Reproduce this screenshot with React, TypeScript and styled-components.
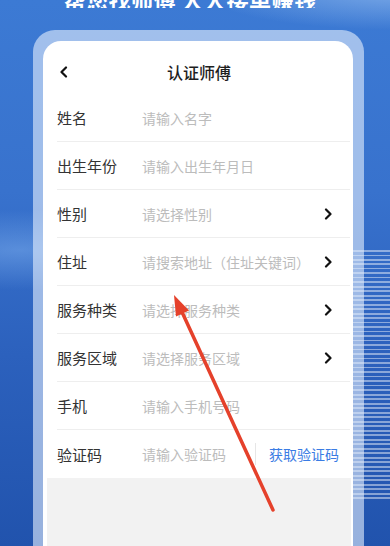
import React from "react";
import styled, { createGlobalStyle } from "styled-components";

const Global = createGlobalStyle`
  html, body { margin: 0; padding: 0; }
  body { font-family: "Noto Sans CJK SC", "Noto Sans", sans-serif; }
  * { box-sizing: border-box; }
`;

const Page = styled.div`
  position: relative;
  width: 390px;
  height: 546px;
  overflow: hidden;
  display: flex;
  flex-direction: column;
  background:
    repeating-linear-gradient(180deg, rgba(255,255,255,0.45) 0 1.5px, transparent 1.5px 4.5px) right 0 top 250px / 37px 250px no-repeat,
    radial-gradient(ellipse 170px 40px at 20px 250px, rgba(120,170,235,0.55), rgba(120,170,235,0) 100%),
    radial-gradient(ellipse 200px 40px at 400px -10px, rgba(150,190,240,0.7), rgba(150,190,240,0) 100%),
    linear-gradient(180deg, #3c7ad4 0%, #3872cd 35%, #2c61bd 65%, #2153ad 100%);
`;

const HeadStrip = styled.div`
  height: 8px;
  overflow: hidden;
  display: flex;
  align-items: flex-end;
  justify-content: center;
  padding-right: 10px;
`;

const Slogan = styled.div`
  color: #fff;
  font-size: 22px;
  font-weight: 700;
  line-height: 22px;
  margin-bottom: -2px;
  white-space: nowrap;
  letter-spacing: 0.5px;
`;

const Frame = styled.div`
  margin: 22px 0 0 33px;
  width: 331px;
  flex: 1;
  padding: 11px 11px 0 10px;
  border-radius: 22px 22px 0 0;
  background: rgba(225, 236, 252, 0.62);
  display: flex;
  flex-direction: column;
`;

const Card = styled.div`
  flex: 1;
  background: #fff;
  border-radius: 18px 18px 0 0;
  display: flex;
  flex-direction: column;
`;

const Header = styled.div`
  height: 53px;
  display: flex;
  align-items: center;
  justify-content: center;
  position: relative;
  padding-top: 9px;
`;

const BackBtn = styled.div`
  position: absolute;
  left: 16px;
  top: 25px;
  width: 10px;
  height: 12px;
  display: flex;
`;

const Title = styled.div`
  font-size: 16px;
  font-weight: 500;
  color: #1e1e1e;
  padding-left: 2px;
`;

const Row = styled.div<{ $last?: boolean }>`
  height: 48px;
  margin-left: 14px;
  margin-right: 3px;
  display: flex;
  align-items: center;
  border-bottom: ${(p) => (p.$last ? "none" : "1px solid #eeeeee")};
`;

const Label = styled.div`
  width: 85px;
  font-size: 15px;
  color: #333;
  flex-shrink: 0;
`;

const Placeholder = styled.div`
  flex: 1;
  font-size: 14px;
  color: #bcbcbc;
  white-space: nowrap;
`;

const Chevron = styled.div`
  width: 10px;
  height: 12px;
  margin-right: 17px;
  display: flex;
`;

const VDivider = styled.div`
  width: 1px;
  height: 22px;
  background: #e6e6e6;
  margin-right: 13px;
`;

const CodeBtn = styled.div`
  font-size: 14px;
  color: #3a7ce4;
  margin-right: 11px;
  white-space: nowrap;
`;

const Footer = styled.div`
  flex: 1;
  margin: 0 2px 0 4px;
  background: #f2f2f2;
`;

const Arrow = styled.svg`
  position: absolute;
  left: 0;
  top: 0;
  pointer-events: none;
`;

const ChevronIcon = ({ left }: { left?: boolean }) => (
  <svg width="10" height="12" viewBox="0 0 10 12">
    <path
      d={left ? "M7 1.5 L2.5 6 L7 10.5" : "M3 1.5 L7.5 6 L3 10.5"}
      fill="none"
      stroke="#111"
      strokeWidth="2.2"
      strokeLinecap="round"
      strokeLinejoin="round"
    />
  </svg>
);

type Field = { label: string; ph: string; arrow?: boolean };

const fields: Field[] = [
  { label: "姓名", ph: "请输入名字" },
  { label: "出生年份", ph: "请输入出生年月日" },
  { label: "性别", ph: "请选择性别", arrow: true },
  { label: "住址", ph: "请搜索地址（住址关键词）", arrow: true },
  { label: "服务种类", ph: "请选择服务种类", arrow: true },
  { label: "服务区域", ph: "请选择服务区域", arrow: true },
  { label: "手机", ph: "请输入手机号码" },
];

export default function App() {
  return (
    <Page>
      <Global />
      <HeadStrip>
        <Slogan>帮您找师傅 人人接单赚钱</Slogan>
      </HeadStrip>
      <Frame>
        <Card>
          <Header>
            <BackBtn>
              <ChevronIcon left />
            </BackBtn>
            <Title>认证师傅</Title>
          </Header>
          {fields.map((f) => (
            <Row key={f.label}>
              <Label>{f.label}</Label>
              <Placeholder>{f.ph}</Placeholder>
              {f.arrow && (
                <Chevron>
                  <ChevronIcon />
                </Chevron>
              )}
            </Row>
          ))}
          <Row $last>
            <Label>验证码</Label>
            <Placeholder>请输入验证码</Placeholder>
            <VDivider />
            <CodeBtn>获取验证码</CodeBtn>
          </Row>
          <Footer />
        </Card>
      </Frame>
      <Arrow width="390" height="546" viewBox="0 0 390 546">
        <line x1="273" y1="510" x2="182" y2="312" stroke="#e5412b" strokeWidth="3.5" strokeLinecap="round" />
        <polygon points="174,295 189,310.5 176,316.5" fill="#e5412b" />
      </Arrow>
    </Page>
  );
}
